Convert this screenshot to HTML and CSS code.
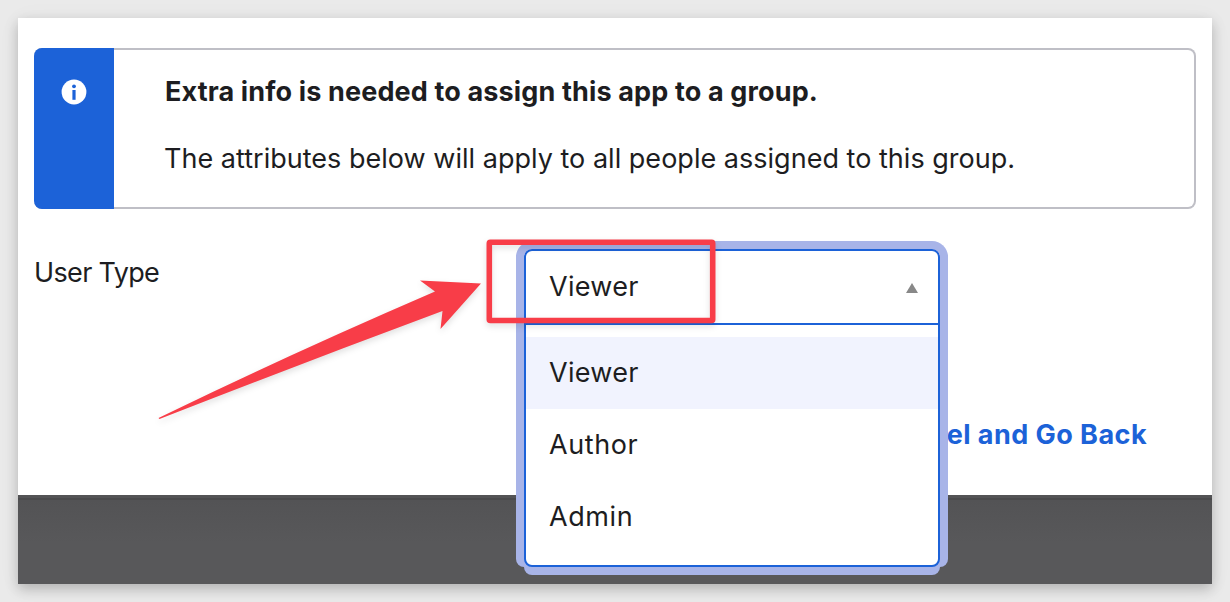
FILE: index.html
```html
<!DOCTYPE html>
<html lang="en">
<head>
<meta charset="utf-8">
<title>Assign application</title>
<link rel="stylesheet" href="styles.css">
</head>
<body>
<main class="window">
  <section class="dialog">
    <div class="callout">
      <div class="callout-side">
        <svg class="info-icon" viewBox="0 0 26 26"><circle cx="13" cy="13" r="12.4" fill="#fff"/><circle cx="13" cy="7.3" r="1.9" fill="#1c62d8"/><path d="M11.4 11h3.2v9.8h-3.2z" fill="#1c62d8"/></svg>
      </div>
      <div class="callout-body">
        <h1 class="callout-title">Extra info is needed to assign this app to a group.</h1>
        <p class="callout-text">The attributes below will apply to all people assigned to this group.</p>
      </div>
    </div>
    <div class="field">
      <label class="field-label">User Type</label>
      <div class="select">
        <div class="select-value"><span>Viewer</span>
          <svg class="caret" viewBox="0 0 12 10"><path d="M6 0L12 10H0z" fill="#888"/></svg>
        </div>
        <ul class="options">
          <li class="option option-active">Viewer</li>
          <li class="option option-wide">Author</li>
          <li class="option option-wide">Admin</li>
        </ul>
      </div>
    </div>
    <div class="actions"><a class="cancel">Cancel and Go Back</a></div>
  </section>
  <div class="backdrop"></div>
</main>
<svg class="annotation" viewBox="0 0 1230 602">
  <path d="M158.5 418Q290 354 435 291.5L420 280.5L481 283.5L440.5 329L442.5 311Q300 364 159.5 419z" fill="#f83d48"/>
  <rect x="489.3" y="242.3" width="223.4" height="78.2" rx="1" fill="none" stroke="#f83d48" stroke-width="5.6"/>
</svg>
</body>
</html>
```
FILE: styles.css
```css
* { box-sizing: border-box; }
body {
  margin: 0;
  padding: 18px;
  height: 602px;
  overflow: hidden;
  background: #eaeaea;
  color: #1d1d21;
  font: 27px/36px Inter, "Liberation Sans", sans-serif;
}
.window {
  display: flex;
  flex-direction: column;
  height: 566px;
  box-shadow: 0 5px 12px rgba(0, 0, 0, .22), 0 2px 24px rgba(0, 0, 0, .04);
}
.dialog { height: 477px; padding: 30px 16px 0; background: #fff; }
.backdrop {
  flex: 1;
  border-top: 3px solid #535355;
  background: linear-gradient(#4a4a4c 0 2px, #535355 2px, #58585a 45px);
}
.callout {
  display: flex;
  height: 161px;
  border: 2px solid #bfbfc6;
  border-left: 0;
  border-radius: 8px;
}
.callout-side {
  width: 80px;
  margin: -2px 0;
  padding-top: 31px;
  background: #1c62d8;
  border-radius: 8px 0 0 8px;
}
.info-icon { display: block; width: 26px; height: 26px; margin: 0 auto; }
.callout-body { padding: 24px 0 0 50px; }
.callout-title, .callout-text { margin: 0; font-size: 27px; white-space: nowrap; }
.callout-title { font-weight: 700; margin-bottom: 31px; padding-left: 1px; letter-spacing: .14px; }
.callout-text { letter-spacing: .02px; }
.field { display: flex; height: 200px; }
.field-label { width: 490px; padding-top: 46px; letter-spacing: -.65px; }
.select {
  position: relative;
  z-index: 1;
  width: 416px;
  height: 318px;
  margin-top: 40px;
  background: #fff;
  border: 2px solid #1c62d8;
  border-radius: 8px;
  box-shadow: 0 8px #a8b4e8, -8px 0 #a8b4e8, 8px 0 #a8b4e8;
  letter-spacing: .3px;
}
.select::before {
  content: "";
  position: absolute;
  inset: -10px -10px auto;
  z-index: -1;
  height: 84px;
  border: 8px solid #a8b4e8;
  border-bottom: 0;
  border-radius: 16px 16px 0 0;
}
.select-value {
  display: flex;
  align-items: center;
  justify-content: space-between;
  height: 74px;
  padding: 0 20px 0 23px;
  border-bottom: 2px solid #1c62d8;
}
.caret { width: 12px; height: 10px; margin-top: 2px; }
.options { margin: 0; padding: 12px 0; list-style: none; }
.option { height: 72px; padding: 18px 23px; }
.option-wide { letter-spacing: .6px; }
.option-active { background: #f1f3fe; }
.actions { display: flex; justify-content: flex-end; padding: 8px 49px 0; }
.cancel { color: #1c62d8; font-weight: 650; letter-spacing: .45px; }
.annotation {
  position: absolute;
  inset: 0;
  z-index: 2;
  width: 1230px;
  height: 602px;
  filter: drop-shadow(0 3px 3px rgba(0, 0, 0, .12));
}
```
